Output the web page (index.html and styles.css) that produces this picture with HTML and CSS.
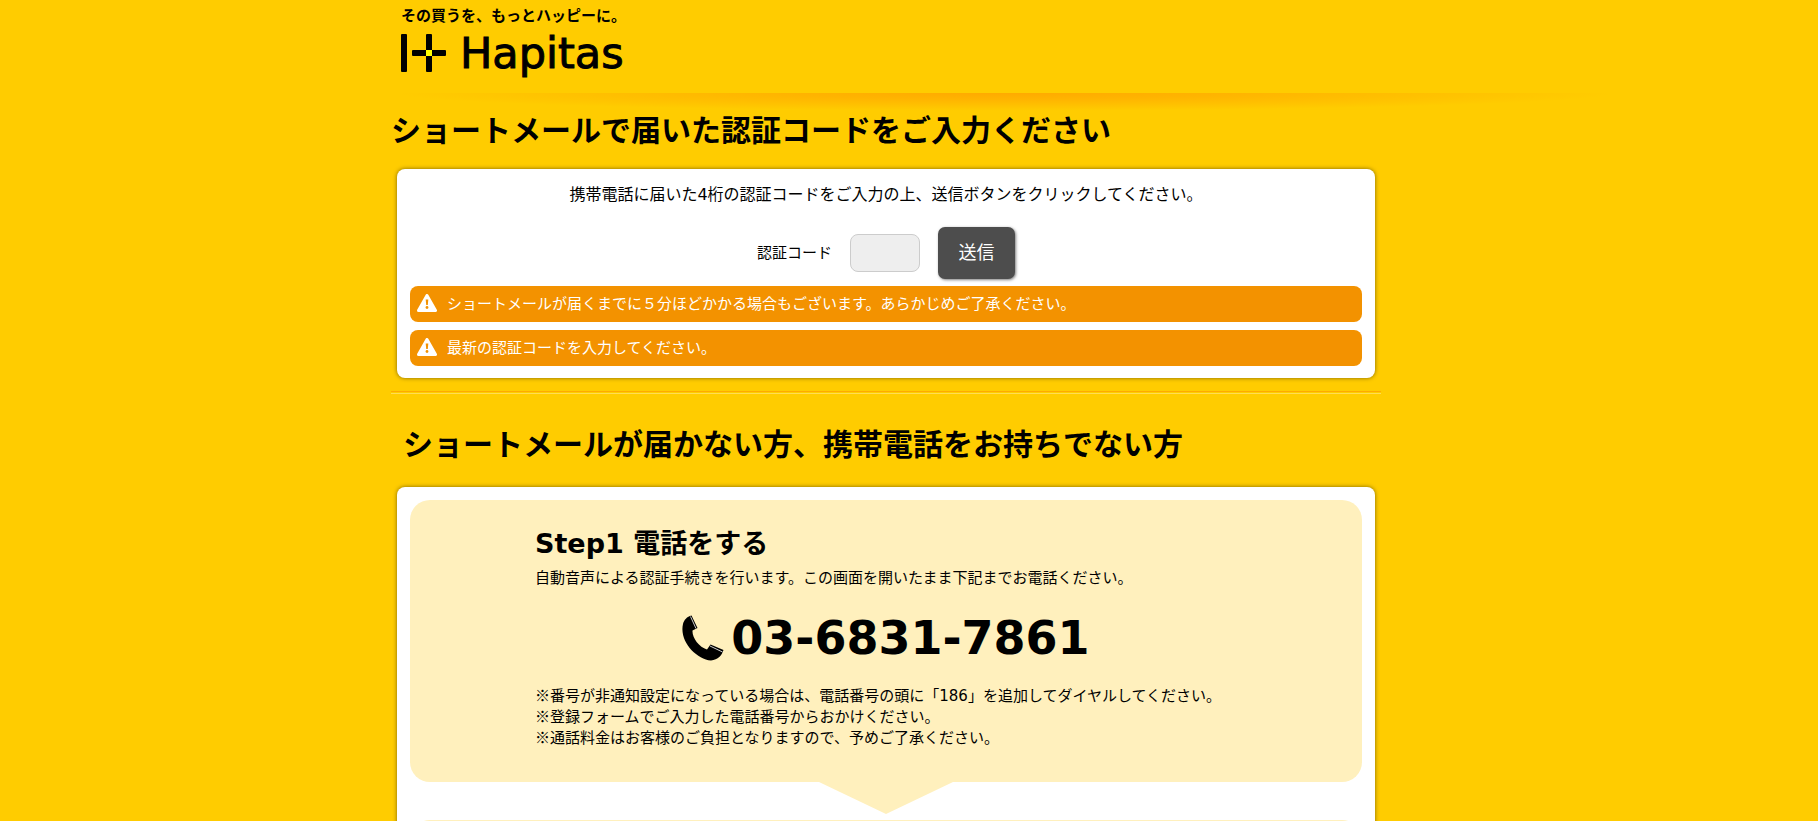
FILE: index.html
```html
<!DOCTYPE html>
<html lang="ja">
<head>
<meta charset="utf-8">
<meta name="viewport" content="width=device-width, initial-scale=1">
<title>Hapitas</title>
<link rel="stylesheet" href="styles.css">
</head>
<body>
<div class="container">
  <header class="header">
    <a class="logo" href="#">
      <span class="tagline">その買うを、もっとハッピーに。</span>
      <span class="brand">
        <svg class="brand-mark" viewBox="0 0 45 38" aria-hidden="true">
          <rect x="0" y="0" width="6" height="38" rx="1"/>
          <rect x="25" y="0" width="6" height="38" rx="1"/>
          <rect x="11" y="16" width="34" height="6" rx="1"/>
          <rect class="brand-dot" x="25" y="16" width="6" height="6"/>
        </svg>
        <span class="brand-name">Hapitas</span>
      </span>
    </a>
  </header>
  <main class="main">
    <h1 class="title">ショートメールで届いた認証コードをご入力ください</h1>
    <section class="box">
      <p class="lead">携帯電話に届いた<span class="latin">4</span>桁の認証コードをご入力の上、送信ボタンをクリックしてください。</p>
      <form class="code-form">
        <label class="code-label" for="code">認証コード</label>
        <input class="code-input" id="code" type="text" maxlength="4">
        <button class="submit" type="button">送信</button>
      </form>
      <ul class="notices">
        <li class="notice">
          <svg class="warn" viewBox="0 0 20 18" aria-hidden="true"><path class="warn-body" d="M10 1.5 18.5 16.5H1.5Z"/><path class="warn-mark" d="M8.700 5.500h2.600l-.5 5.500h-1.600z"/><circle class="warn-mark" cx="10" cy="13.500" r="1.400"/></svg>
          <span>ショートメールが届くまでに５分ほどかかる場合もございます。あらかじめご了承ください。</span>
        </li>
        <li class="notice">
          <svg class="warn" viewBox="0 0 20 18" aria-hidden="true"><path class="warn-body" d="M10 1.5 18.5 16.5H1.5Z"/><path class="warn-mark" d="M8.700 5.500h2.600l-.5 5.500h-1.600z"/><circle class="warn-mark" cx="10" cy="13.500" r="1.400"/></svg>
          <span>最新の認証コードを入力してください。</span>
        </li>
      </ul>
    </section>
    <hr class="divider">
    <h2 class="title title-sub">ショートメールが届かない方、携帯電話をお持ちでない方</h2>
    <section class="box">
      <div class="step">
        <h3 class="step-title"><span class="latin">Step1 </span>電話をする</h3>
        <p>自動音声による認証手続きを行います。この画面を開いたまま下記までお電話ください。</p>
        <p class="phone">
          <svg class="phone-icon" viewBox="0 0 42 46" aria-hidden="true">
            <path d="M9.500.5 15.500 13 10.500 15.500C10 23 17 32 25 34.500L28.500 29.500 41.500 35C40 40 36 45 29 45.500 14 44-3 26 1 9 2 5 5 1.500 9.500.5Z"/>
            <path class="phone-line" d="M8.500 1.500 14 13.500M28 31 40.500 37"/>
          </svg>
          <span class="latin">03-6831-7861</span>
        </p>
        <ul class="remarks">
          <li>※番号が非通知設定になっている場合は、電話番号の頭に「<span class="latin">186</span>」を追加してダイヤルしてください。</li>
          <li>※登録フォームでご入力した電話番号からおかけください。</li>
          <li>※通話料金はお客様のご負担となりますので、予めご了承ください。</li>
        </ul>
      </div>
      <svg class="arrow" viewBox="0 0 134 32" aria-hidden="true"><path d="M0 0H134L67 32Z"/></svg>
      <div class="step step-next"></div>
    </section>
  </main>
</div>
</body>
</html>
```
FILE: styles.css
```css
* {
  box-sizing: border-box;
}

body {
  height: 100vh;
  margin: 0;
  overflow: hidden;
  background: #fc0;
  color: #000;
  font: 15px/21px "Noto Sans CJK JP", sans-serif;
}

h1, h2, h3, p, ul {
  margin: 0;
  padding: 0;
}

ul {
  list-style: none;
}

.latin {
  font-family: "DejaVu Sans", sans-serif;
  line-height: 1;
}

.container {
  max-width: 1036px;
  margin: 0 auto;
}

.header {
  position: relative;
  height: 93px;
  padding: 4px 10px 0;
}

/* soft shade under the header */
.header::after {
  content: "";
  position: absolute;
  top: 100%;
  left: 0;
  width: 1227px;
  height: 18px;
  background: radial-gradient(ellipse at top, #ffaa00 0%, #ffb400 25%, #fc0 70%);
}

.logo {
  display: inline-flex;
  flex-direction: column;
  gap: 8px;
  color: #000;
  text-decoration: none;
}

.tagline {
  font-weight: 700;
  line-height: 22px;
}

.brand {
  display: flex;
  align-items: center;
  gap: 14px;
}

.brand-mark {
  width: 45px;
  height: 38px;
}

.brand-dot {
  fill: #ff0;
}

.brand-name {
  font: 43px/38px "DejaVu Sans", sans-serif;
  -webkit-text-stroke: 1px #000;
}

.main {
  position: relative;
  max-width: 990px;
}

.title {
  padding: 13px 0 18px;
  font-size: 30px;
  line-height: 45px;
}

.title-sub {
  padding: 26px 12px 22px;
}

.box {
  margin: 0 6px;
  padding: 13px 13px 12px;
  border-radius: 8px;
  background: #fff;
  box-shadow: 0 0 4px rgba(0, 0, 0, 0.5);
}

.lead {
  font-size: 16px;
  line-height: 22px;
  text-align: center;
}

.code-form {
  display: flex;
  align-items: center;
  justify-content: center;
  gap: 18px;
  padding: 23px 0 7px;
}

.code-label {
  padding-bottom: 4px;
}

.code-input {
  width: 70px;
  height: 38px;
  padding: 0 8px;
  border: 1px solid #ccc;
  border-radius: 8px;
  background: #eee;
  font: inherit;
}

.submit {
  width: 77px;
  height: 52px;
  padding: 0 0 4px;
  border: 0;
  border-radius: 7px;
  background: #4d4d4d;
  box-shadow: 1px 1px 3px rgba(0, 0, 0, 0.5);
  color: #fff;
  font: inherit;
  font-size: 18px;
}

.notices {
  display: grid;
  gap: 8px;
}

.notice {
  display: flex;
  align-items: center;
  gap: 10px;
  min-height: 36px;
  padding: 0 7px 3px;
  border-radius: 8px;
  background: #f39200;
  color: #fff;
}

.warn {
  flex: none;
  width: 20px;
  height: 18px;
}

.warn-body {
  fill: #fff;
  stroke: #fff;
  stroke-width: 3;
  stroke-linejoin: round;
}

.warn-mark {
  fill: #f39200;
}

.divider {
  height: 3px;
  margin: 13px 0 0;
  border: solid;
  border-width: 1px 0;
  border-color: #ffaa00 transparent #ffdd55;
}

.step {
  padding: 22px 125px 35px;
  border-radius: 20px;
  background: #fff0bd;
}

.step-title {
  padding-bottom: 4px;
  font-size: 27px;
  line-height: 40px;
}

.phone {
  display: flex;
  align-items: center;
  justify-content: center;
  gap: 7px;
  padding: 28px 0 23px;
  font-size: 46px;
  font-weight: 700;
}

.phone-icon {
  width: 42px;
  height: 46px;
}

.phone-line {
  fill: none;
  stroke: #ccc;
  stroke-width: 1;
}

.arrow {
  display: block;
  width: 134px;
  height: 32px;
  margin: 0 auto 6px;
  fill: #fff0bd;
}

.step-next {
  min-height: 280px;
}
```
